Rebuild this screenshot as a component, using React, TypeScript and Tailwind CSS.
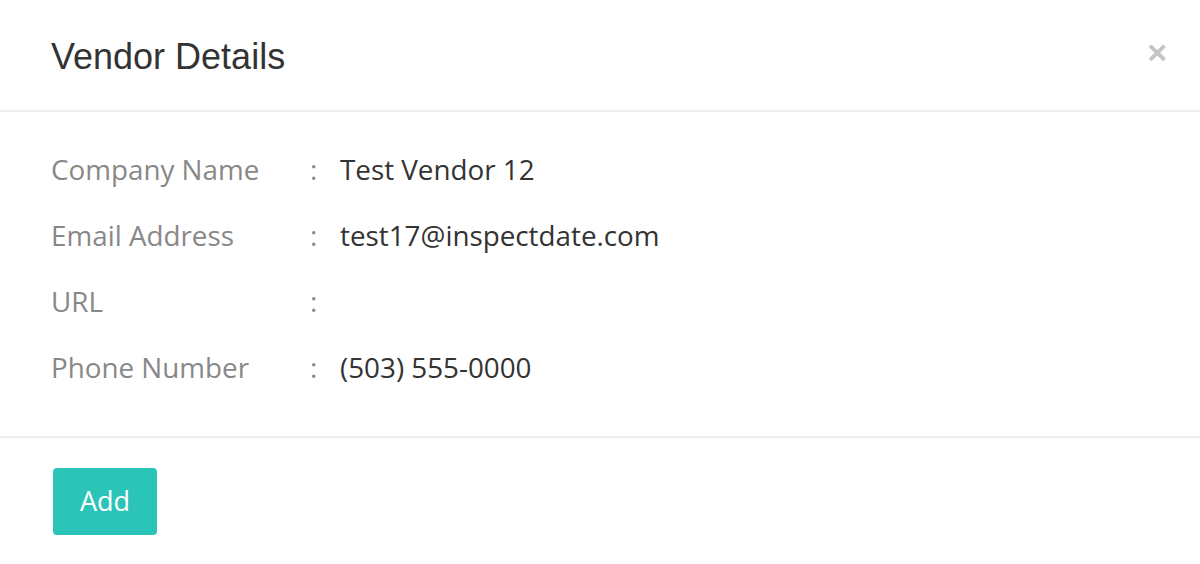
import React from 'react';

const rows: { label: string; value: string }[] = [
  { label: 'Company Name', value: 'Test Vendor 12' },
  { label: 'Email Address', value: 'test17@inspectdate.com' },
  { label: 'URL', value: '' },
  { label: 'Phone Number', value: '(503) 555-0000' },
];

export default function App() {
  return (
    <div className="w-[1200px] h-[564px] bg-white flex flex-col overflow-hidden">
      <header className="h-[112px] flex items-center justify-between pl-[51px] pr-[33px] border-b-2 border-[#eeeeee] flex-shrink-0">
        <h1 className="text-[36px] text-[#333333] font-['Liberation_Sans',Arial,sans-serif] leading-none pt-[4px]">
          Vendor Details
        </h1>
        <button className="text-[#c4c4c4] text-[34px] font-bold leading-none font-['Liberation_Sans',Arial,sans-serif] -mt-[6px]">
          ×
        </button>
      </header>

      <main className="flex flex-col pl-[51px] pt-[25px] h-[326px] border-b-2 border-[#eeeeee] flex-shrink-0 font-['Open_Sans',sans-serif]">
        {rows.map((r) => (
          <div key={r.label} className="flex items-center h-[66px] text-[27.8px]">
            <span className="w-[259px] text-[#888888]">{r.label}</span>
            <span className="w-[30px] text-[#888888]">:</span>
            <span className="text-[#333333]">{r.value}</span>
          </div>
        ))}
      </main>

      <footer className="pl-[53px] pt-[30px]">
        <button className="w-[104px] h-[67px] rounded-[4px] bg-[#2bc4b8] text-white text-[27px] font-['Open_Sans',sans-serif]">
          Add
        </button>
      </footer>
    </div>
  );
}
